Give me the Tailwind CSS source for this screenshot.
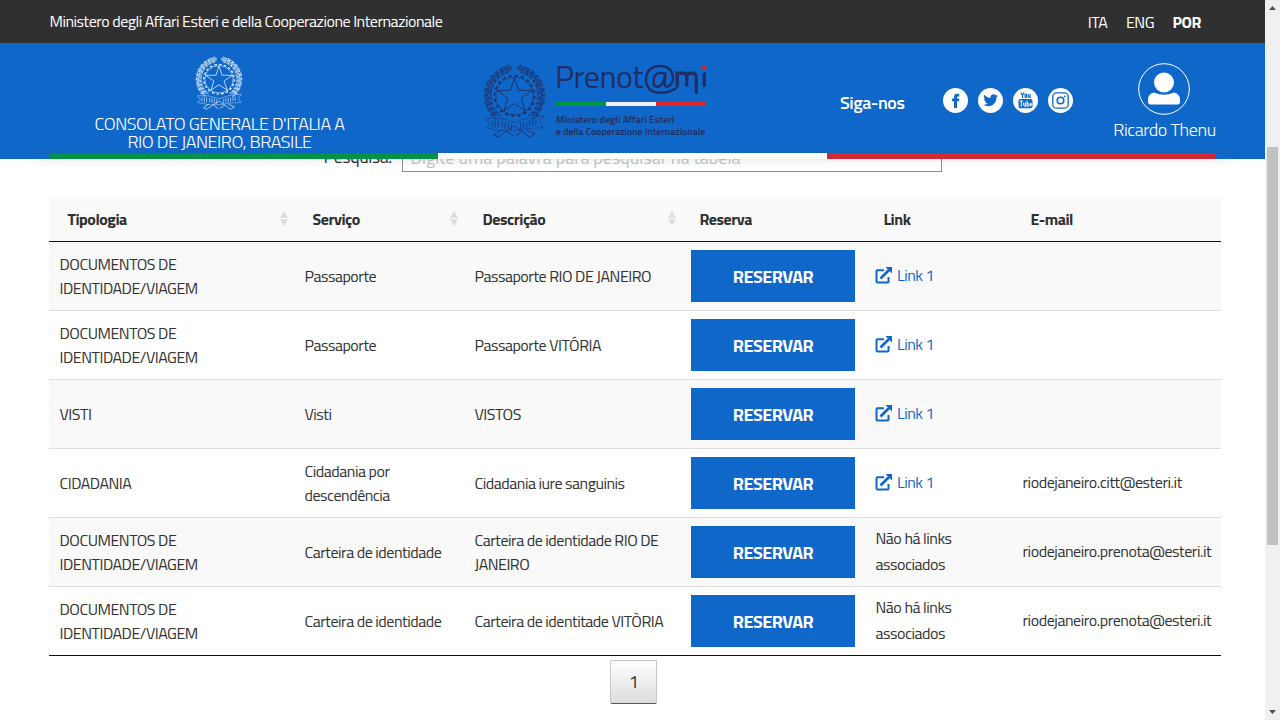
<!DOCTYPE html>
<html lang="pt">
<head>
<meta charset="utf-8">
<title>Prenot@mi</title>
<script src="https://cdn.jsdelivr.net/npm/@tailwindcss/browser@4"></script>
</head>
<body class="h-[720px] w-[1280px] overflow-hidden bg-white font-['Titillium_Web',Roboto,sans-serif] tracking-[-0.46px] text-[#303030]">

<svg class="hidden">
  <symbol id="emblem" viewBox="0 0 62 72">
    <g fill="none" stroke="currentColor" stroke-width=".5">
      <g id="leaves"></g>
      <circle cx="31" cy="31" r="18.3" stroke-width=".7"/>
      <circle cx="31" cy="31" r="19.700" stroke-width="1.600" stroke-dasharray="3.2 2.960"/>
      <path stroke-width=".9" d="M31 13.500L35 25.600L48 25.900L37.600 33.300L41.500 45.700L31 38.300L20.500 45.700L24.400 33.300L14 25.900L27 25.600Z"/>
      <path d="M3 53Q17 51 31 57Q45 51 60 51L56 56L59 62Q44 62 31 65Q17 66 3 62L7 58Z"/>
      <path d="M19 56V62M22 56V63M25 57V63M28 58V64M37 57V63M40 56V62M43 56V62M46 55V61M49 54V60M52 54V60M9 55V61M12 55V62M15 55V62" stroke-width=".7"/>
      <path d="M18 64L11 69L15 71L31 60L46 71L51 68L43 64M24 66L30 70M38 66L32 70" stroke-width=".8"/>
    </g>
  </symbol>
</svg>

<div class="flex h-full">
  <div class="relative h-full w-[1265px]">

    <header class="absolute inset-x-0 top-0 z-10 whitespace-nowrap text-white">
      <div class="flex h-[43px] items-center justify-between bg-[#303030] pr-[64px] pb-[2px] pl-[49.5px] text-base">
        <span class="tracking-[-0.48px]">Ministero degli Affari Esteri e della Cooperazione Internazionale</span>
        <nav class="flex gap-[18.5px] pt-[2px]">
          <span>ITA</span>
          <span>ENG</span>
          <span class="font-bold">POR</span>
        </nav>
      </div>
      <div class="h-[116px] bg-[#0f67ca]">
        <div class="flex h-[110px] items-start">
          <div class="ml-[49px] flex w-[341px] flex-col items-center pt-[13px] text-lg leading-[18px] font-light tracking-[-0.45px]">
            <svg class="mr-px h-[54px] w-[48px] text-white" preserveAspectRatio="none" viewBox="0 0 62 72"><use href="#emblem"/></svg>
            <span class="mt-[5px]">CONSOLATO GENERALE D'ITALIA A</span>
            <span>RIO DE JANEIRO, BRASILE</span>
          </div>
          <div class="ml-[93px] flex pt-[20px] text-[#1f2f63]">
            <svg class="mt-px h-[74px] w-[63px]" preserveAspectRatio="none" viewBox="0 0 62 72"><use href="#emblem"/></svg>
            <div class="ml-[10px] w-[150px]">
              <div class="flex h-[39px] items-start text-[32px] leading-[27px] tracking-[-0.5px]">
                <span class="w-[88px] shrink-0 -indent-[1px]">Prenot</span>
                <svg class="mt-px h-[32px] w-[64px] shrink-0" viewBox="0 0 64 32" fill="none" stroke="currentColor">
                  <path stroke-width="2.500" d="M21.500 10C18 8.500 13 8.500 11 11.500C8.500 16 8.500 22 13 22.700C17.500 23 20 18 21.500 10ZM21.500 10L20.500 19Q20.300 22.700 23.500 22.700Q29 21 29 13Q27.500 2 16 2Q2 2.500 2 16Q2.500 28.500 16 28.800Q24 29.300 32.500 24"/>
                  <path stroke-width="3.400" d="M33.200 23.500V9.300H39.500Q42.700 9.300 42.700 13V22.500M42.700 13Q42.700 9.300 46 9.300H48.500Q52.300 9.300 52.300 14V30M60.300 8.500V23"/>
                  <path stroke="#e0242a" stroke-width="4" d="M60.300 1V5"/>
                </svg>
              </div>
              <div class="flex h-[4px]"><i class="w-1/3 bg-[#009640]"></i><i class="w-1/3 bg-[#f0f0f8]"></i><i class="w-1/3 bg-[#e0242a]"></i></div>
              <div class="mt-[8px] text-[9.800px] leading-[12px] font-semibold tracking-[0.02px]"><div class="tracking-[0.12px]">Ministero degli Affari Esteri</div><div>e della Cooperazione Internazionale</div></div>
            </div>
          </div>
          <span class="mt-[48px] ml-[134px] w-[65px] text-lg leading-6 font-semibold">Siga-nos</span>
          <div class="mt-[45px] ml-[38px] flex gap-[10px] text-[#0f67ca]">
            <svg class="size-[25px]" viewBox="0 0 25 25"><circle cx="12.500" cy="12.500" r="12.500" fill="#fff"/><path fill="currentColor" d="M11 20V13.300H9V10.600H11V9Q11 5.800 14.200 5.800H16.200V8.500H14.900Q14 8.500 14 9.500V10.600H16.300L16 13.300H14V20Z"/></svg>
            <svg class="size-[25px]" viewBox="0 0 25 25"><circle cx="12.500" cy="12.500" r="12.500" fill="#fff"/><path fill="currentColor" transform="translate(5.300 4.900) scale(.61)" d="M23.950 4.570a10 10 0 0 1-2.820.770 4.960 4.960 0 0 0 2.160-2.720c-.95.550-2 .960-3.130 1.180a4.920 4.920 0 0 0-8.380 4.480C7.690 8.090 4.070 6.130 1.640 3.160a4.820 4.820 0 0 0-.67 2.480c0 1.710.870 3.210 2.190 4.100a4.900 4.900 0 0 1-2.230-.62v.060a4.920 4.920 0 0 0 3.950 4.830 5 5 0 0 1-2.210.080 4.940 4.940 0 0 0 4.600 3.420A9.870 9.870 0 0 1 0 19.540a13.990 13.990 0 0 0 7.550 2.210c9.050 0 14-7.500 14-13.990 0-.210 0-.420-.020-.630A9.940 9.940 0 0 0 24 4.590z"/></svg>
            <svg class="size-[25px]" viewBox="0 0 25 25"><circle cx="12.500" cy="12.500" r="12.500" fill="#fff"/><path fill="none" stroke="currentColor" stroke-width="1.200" d="M8 4.500L9.500 7.500V10M11 4.500L9.500 7.500M12 6.800V8.700Q12 9.500 12.800 9.500Q13.600 9.500 13.600 8.700V6.800Q13.600 6.200 12.800 6.200Q12 6.200 12 6.800ZM15.300 6.200V9Q16 10 17 9V6M17 8V10"/><rect x="5.500" y="11" width="14" height="9.300" rx="2" fill="currentColor"/><path fill="none" stroke="#fff" stroke-width="1" d="M6.800 13H9.800M8.300 13V18.700M10.700 14.500V17.500Q11.300 18.800 12.400 17.500V14.500M12.400 16V18.700M14 12.500V18.500Q15.700 18.600 15.700 17.500V15.500Q15.200 14.600 14 15.300M18.500 17.500Q17.200 19.200 17.200 17V15.600Q18 14.300 18.600 15.600V16.500H17.300"/></svg>
            <svg class="size-[25px]" viewBox="0 0 25 25"><circle cx="12.500" cy="12.500" r="12.500" fill="#fff"/><g fill="none" stroke="currentColor" stroke-width="1.300"><rect x="4.800" y="4.800" width="15.400" height="15.400" rx="3.800"/><circle cx="12.500" cy="12.500" r="3.300" stroke-width="1.600"/></g><circle cx="16.800" cy="8.300" r=".9" fill="currentColor"/></svg>
          </div>
          <div class="ml-[40px] flex w-[103px] flex-col items-center pt-[19px]">
            <svg class="mr-px size-[54px]" viewBox="0 0 54 54" fill="#fff"><circle cx="27" cy="27" r="25.300" fill="none" stroke="#fff"/><circle cx="27" cy="20.500" r="10"/><path d="M17 30.500Q27 35 37 30.500Q43 32 43 37.500V40Q43 42.500 40.500 42.500H13.500Q11 42.500 11 40V37.500Q11 32 17 30.500Z"/></svg>
            <span class="mt-[2px] text-lg leading-6 font-light tracking-[-0.38px]">Ricardo Thenu</span>
          </div>
        </div>
        <div class="mx-[33px] flex h-[6px] px-4 shadow-[0_0_10px_rgba(65,70,80,0.18)]"><i class="w-[389px] bg-[#009246]"></i><i class="w-[389px] bg-white"></i><i class="w-[389px] bg-[#ce2b37]"></i></div>
      </div>
    </header>

    <main class="px-[49px] pt-[142px]">
      <div class="flex h-[30px] items-start text-lg">
        <label class="ml-[274.5px] w-[68.5px] leading-[29px]">Pesquisa:</label>
        <div class="ml-[10px] h-[30px] w-[540px] border border-[#8a8a8a] bg-white pl-[7.5px] leading-[29px] tracking-normal text-[#c4c4c4]">Digite uma palavra para pesquisar na tabela</div>
      </div>
      <div class="mt-[25px] w-[1172px]">
        <div class="grid h-[45px] grid-cols-[245px_170px_216px_185px_147px_209px] items-center border-b border-[#111] bg-[#f9f9f9] text-base font-bold" id="head"></div>
        <div id="rows" class="border-b border-[#111] text-base leading-6 tracking-[-0.48px] text-[#333]"></div>
      </div>
      <div class="mt-[4px] ml-[561px] flex h-[44px] w-[47px] items-center justify-center rounded-[2px] border border-[#c4c4c4] border-b-[#0f67ca] bg-linear-to-b from-white to-[#dcdcdc] text-lg text-[#333]">1</div>
    </main>
  </div>

  <aside class="flex h-full w-[15px] flex-col items-center bg-[#f0f0f0]">
    <svg class="mt-[5px] h-[6px] w-[9px]" viewBox="0 0 9 6" fill="#505050"><path d="M1 5H8L4.500 1Z"/></svg>
    <div class="mt-[136px] h-[398px] w-[11px] bg-[#c1c1c1]"></div>
    <svg class="mt-[164px] h-[6px] w-[9px]" viewBox="0 0 9 6" fill="#505050"><path d="M1 1H8L4.500 5Z"/></svg>
  </aside>
</div>

<script>
// Laurel and oak branches around the gear
let leaves = '';
for (const [radius, step, tilt] of [[24.500, 11, 28], [28, 10, -12], [26.500, 13, 70]]) {
  for (let a = 14; a < 140; a += step) {
    for (const side of [1, -1]) {
      const t = a * Math.PI / 180;
      const x = 31 + side * Math.sin(t) * radius, y = 31 - Math.cos(t) * radius * 1.02;
      leaves += `<path transform="translate(${x} ${y}) rotate(${side * (a - 90 + tilt)})" d="M0-4Q2.600-1 0 4Q-2.600-1 0-4Z"/>`;
    }
  }
}
document.getElementById('leaves').innerHTML = leaves;

const sort = m => `<svg class="${m} mb-px h-[15px] w-[8px]" viewBox="0 0 8 15" fill="#dcdcdc"><path d="M0 7H8L4 0ZM0 8.300H8L4 15Z"/></svg>`;
document.getElementById('head').innerHTML = [['Tipologia', 'pl-[18.5px]', 'mr-[6px]'], ['Serviço', 'pl-[18.5px]', 'mr-[6px]'], ['Descrição', 'pl-[18.5px]', 'mr-[4.5px]'], ['Reserva', 'pl-[19.5px]'], ['Link', 'pl-[18.5px]'], ['E-mail', 'pl-[18.5px]']]
  .map(([s, pad, m]) => `<div class="flex items-center justify-between ${pad}"><span>${s}</span>${m ? sort(m) : ''}</div>`).join('');

const doc = 'DOCUMENTOS DE<br>IDENTIDADE/VIAGEM';
const link = '<div class="-ml-[0.5px] flex items-center gap-[5px] pb-[3px] text-[#0f67ca]"><svg class="size-[17px]" viewBox="0 0 17 17" fill="none" stroke="currentColor" stroke-width="2"><path d="M9 3.200H2.500Q1.500 3.200 1.500 4.200V14.500Q1.500 15.500 2.500 15.500H12.500Q13.500 15.500 13.500 14.500V10"/><path stroke-width="2.600" d="M5.500 11.500L14 3"/><path fill="currentColor" stroke="none" d="M10.500 0H17V6.500Z"/></svg>Link 1</div>';
const none = '<div class="pb-[3px] leading-[26px]">Não há links<br>associados</div>';
const data = [
  [doc, 'Passaporte', 'Passaporte RIO DE JANEIRO', link, ''],
  [doc, 'Passaporte', 'Passaporte VITÓRIA', link, ''],
  ['VISTI', 'Visti', 'VISTOS', link, ''],
  ['CIDADANIA', 'Cidadania por<br>descendência', 'Cidadania iure sanguinis', link, 'riodejaneiro.citt@esteri.it'],
  [doc, 'Carteira de identidade', 'Carteira de identidade RIO DE<br>JANEIRO', none, 'riodejaneiro.prenota@esteri.it'],
  [doc, 'Carteira de identidade', 'Carteira de identitade VITÒRIA', none, 'riodejaneiro.prenota@esteri.it']
];
document.getElementById('rows').innerHTML = data.map(([a, b, c, l, m]) => `
  <div class="grid h-[69px] grid-cols-[245px_170px_216px_185px_147px_209px] items-center border-b border-[#ddd] pt-px whitespace-nowrap last:h-[68px] last:border-b-0 odd:bg-[#f9f9f9]">
    <div class="pb-[2px] pl-[10.5px]">${a}</div><div class="pb-[2px] pl-[10.5px]">${b}</div><div class="pb-[2px] pl-[10.5px]">${c}</div>
    <div class="pb-px pl-[11px]"><div class="flex h-[52px] w-[164px] items-center justify-center bg-[#0f67ca] pt-[2px] text-lg font-bold tracking-[-0.46px] text-white">RESERVAR</div></div>
    <div class="pl-[10.5px]">${l}</div><div class="pb-[2.5px] pl-[10.5px] tracking-[-0.44px]">${m}</div>
  </div>`).join('');
</script>
</body>
</html>
